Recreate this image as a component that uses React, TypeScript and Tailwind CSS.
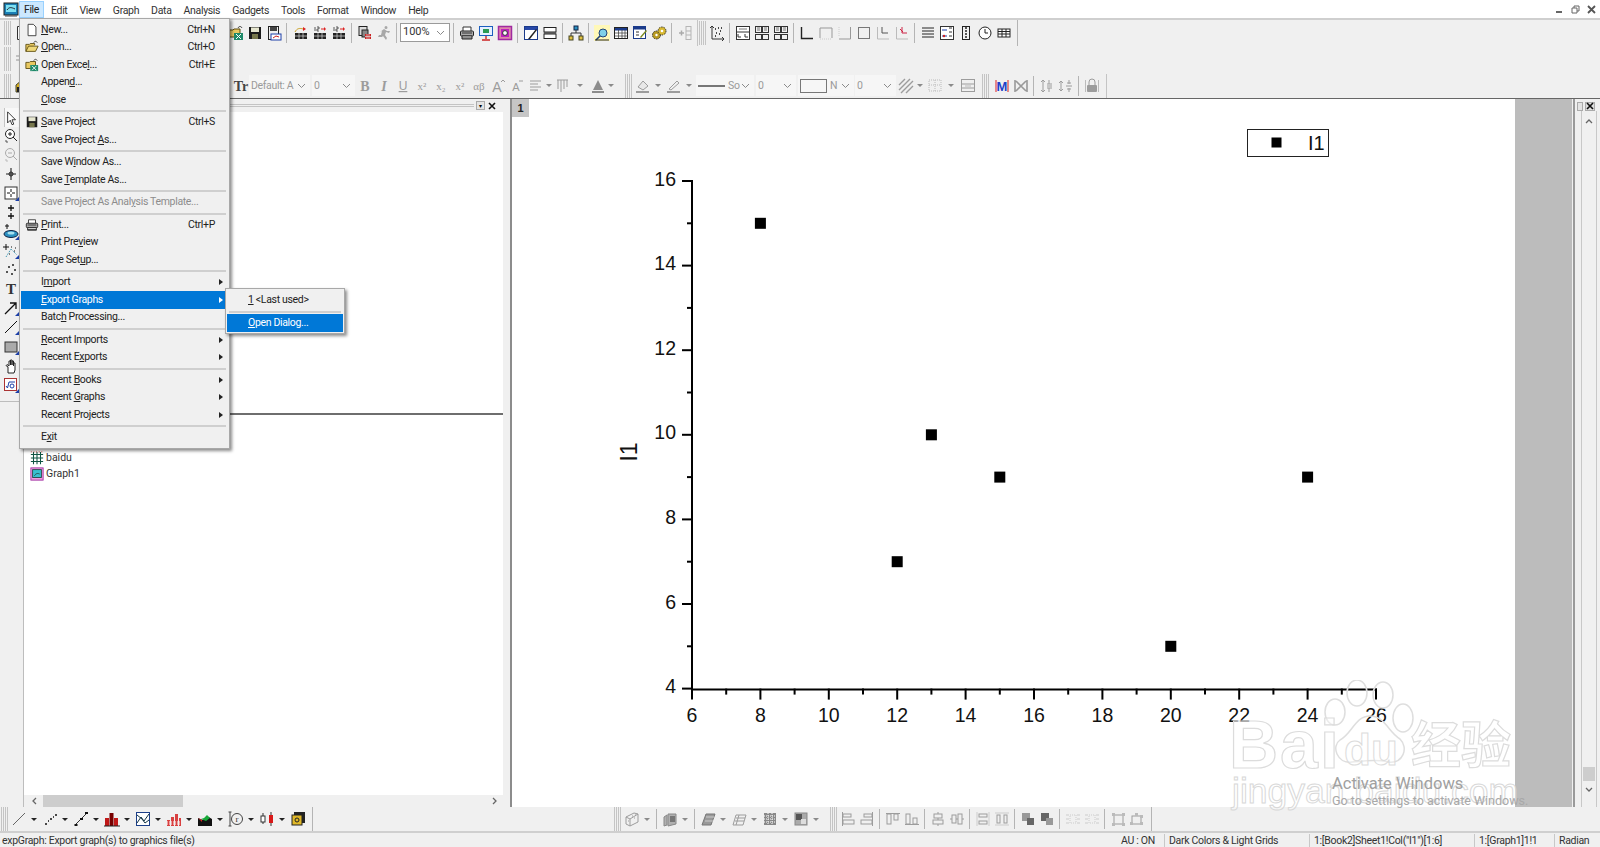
import React, { ReactNode } from "react";

const G = "#9c9c9c";
const Svg = ({ children, s = 16 }: { children: ReactNode; s?: number }) => (
  <svg width={s} height={s} viewBox="0 0 16 16" fill="none" className="block shrink-0">{children}</svg>
);

const grid = (a: string, x = 2, y = 8, w = 12, h = 6) => (
  <g>
    <rect x={x} y={y} width={w} height={h} fill={a} />
    <path d={`M${x} ${y + h / 2}h${w}M${x + w / 3} ${y}v${h}M${x + (2 * w) / 3} ${y}v${h}`} stroke="#ddd" strokeWidth="0.7" />
  </g>
);
const corner = <path d="M16 16v-4l-4 4z" fill="#1c3fa8" />;

const icons: Record<string, ReactNode> = {
  logo: <g><rect x="1" y="2" width="14" height="12" fill="#1a7fb5" stroke="#222" /><rect x="3" y="4" width="10" height="7" fill="#7fe0f0" /><path d="M4 9c2-3 4-3 8-1" stroke="#223" /><path d="M2 15h12" stroke="#444" /></g>,
  newdoc: <path d="M3.5 1.5h6l3 3v10h-9z" stroke="#333" fill="#fff" />,
  open: <g><path d="M1 13V5h4l1-1h5v2" stroke="#5a4a10" fill="#e8c860" /><path d="M1 13l3-6h11l-3 6z" fill="#f0d878" stroke="#5a4a10" /><path d="M10 3c1-2 3-2 4 0" stroke="#333" /></g>,
  excel: <g><path d="M1 12V5h4l1-1h6v8z" fill="#e8c860" stroke="#5a4a10" /><rect x="6" y="8" width="9" height="7" fill="#1f8a6a" /><path d="M8 9l5 5M13 9l-5 5" stroke="#fff" /><path d="M10 3c1-2 3-2 4 0" stroke="#333" /></g>,
  save: <g><rect x="2" y="2" width="12" height="12" fill="#1c1c1c" /><rect x="4" y="2.5" width="8" height="4.5" fill="#e6e6cf" /><rect x="5" y="9" width="6" height="5" fill="#77774c" /></g>,
  saveas: <g><rect x="2.5" y="1.5" width="10" height="13" stroke="#222" /><rect x="4" y="2" width="7" height="4" fill="#444" /><rect x="5" y="9" width="10" height="6" fill="#fff" stroke="#1c3fa8" /><path d="M7 13l3-2 3 1" stroke="#c22" /></g>,
  gridA: <g>{grid("#222")}<path d="M2 7c2-4 5-4 8-3" stroke="#c9a020" /><path d="M10 2l3 2-3 2z" fill="#d22" /></g>,
  grid12: <g>{grid("#222")}<path d="M3 2v4M5 2h2v2H5v2h2" stroke="#333" strokeWidth="0.8" /><path d="M9 4h3" stroke="#d22" /><path d="M12 2l2 2-2 2z" fill="#d22" /></g>,
  copyRed: <g><rect x="2" y="1.5" width="8" height="9" fill="#ddd" stroke="#222" /><rect x="5" y="5" width="6" height="7" fill="#888" stroke="#222" />{grid("#c22", 8, 9, 6, 5)}</g>,
  runner: <path d="M10 1a1.5 1.5 0 110 3 1.5 1.5 0 010-3zM4 7l4-3 3 2 3 0-1 2-3-1-1 3 2 3-1 2-3-4-1 1-4 0 1-2 2 0 1-4-2 1z" fill="#a8a8a8" />,
  printer: <g><path d="M4 6V2h8v4" stroke="#333" fill="#fff" /><rect x="1.5" y="6" width="13" height="5" rx="1" fill="#aaa" stroke="#222" /><path d="M3 13h10M3 11h10v3H3z" stroke="#222" fill="#fff" /><path d="M3 8h10" stroke="#333" /></g>,
  projector: <g><rect x="1.5" y="1.5" width="13" height="9" fill="#e6f0ff" stroke="#1c5fbf" /><rect x="5" y="4" width="6" height="4" fill="#2c9a55" /><path d="M8 11v3M4 15h8" stroke="#c22" strokeWidth="1.4" /></g>,
  magenta: <g><rect x="1.5" y="1.5" width="13" height="13" fill="#d8a" stroke="#a02aa0" strokeWidth="1.5" /><rect x="4" y="4" width="8" height="8" fill="#c020c0" /><circle cx="8" cy="8" r="2.4" fill="#fff" stroke="#333" /></g>,
  notepen: <g><rect x="1.5" y="1.5" width="13" height="13" fill="#fff" stroke="#1a3a8a" /><rect x="2" y="2" width="12" height="3" fill="#2848a8" /><path d="M5 14L13 4l1 1-7 9z" fill="#222" /></g>,
  twolines: <g><rect x="2" y="2.5" width="12" height="4.5" fill="#fff" stroke="#222" /><rect x="2" y="9" width="12" height="4.5" fill="#fff" stroke="#222" /><path d="M2 8h12" stroke="#222" /></g>,
  tree: <g><rect x="6" y="1" width="4" height="4" fill="#2a8fc0" stroke="#124" /><rect x="1" y="11" width="4" height="4" fill="#e0c040" stroke="#442" /><rect x="11" y="11" width="4" height="4" fill="#e0c040" stroke="#442" /><path d="M8 5v3M3 11V8h10v3" stroke="#333" /></g>,
  magnify: <g><rect x="0" y="0" width="16" height="16" fill="#fff8b8" /><circle cx="9" cy="8" r="4" fill="#7fd0e8" stroke="#247" /><path d="M6 11l-4 4" stroke="#247" strokeWidth="1.6" /><path d="M1 15h14" stroke="#222" /></g>,
  table: <g><rect x="1.5" y="2.5" width="13" height="11" fill="#fff" stroke="#222" /><rect x="2" y="3" width="12" height="2.5" fill="#1a3a8a" /><path d="M2 8h12M2 11h12M5.5 5v8M9 5v8M12 5v8" stroke="#333" strokeWidth="0.7" /></g>,
  tablepen: <g><rect x="1.5" y="1.5" width="12" height="12" fill="#fff" stroke="#1a3a8a" /><rect x="2" y="2" width="11" height="2.5" fill="#1a3a8a" /><path d="M4 7h3M4 10h3" stroke="#333" /><path d="M8 12l6-7 1 1-6 7z" fill="#7a8a20" /></g>,
  gears: <g><circle cx="5.5" cy="10" r="4" fill="#b89a20" stroke="#333" strokeDasharray="1.5 1" /><circle cx="11" cy="6" r="4" fill="#d8b830" stroke="#333" strokeDasharray="1.5 1" /><circle cx="11" cy="6" r="1.3" fill="#fff" /><circle cx="5.5" cy="10" r="1.2" fill="#fff" /></g>,
  plusbars: <g><path d="M2 8h5M4.5 5.5v5" stroke="#aaa" strokeWidth="1.5" /><rect x="9" y="1.5" width="5" height="13" stroke="#b5b5b5" /><path d="M9 6h5M9 10h5" stroke="#b5b5b5" /></g>,
  scatterAxes: <g><path d="M3 1v13h12" stroke="#333" /><path d="M1 3l2-2 2 2M13 12l2 2-2 2" stroke="#333" /><path d="M6 4h1M9 3h1M11 6h1M7 8h1M10 9h1M6 11h1M12 3h1" stroke="#111" strokeWidth="1.3" /></g>,
  layout1: <g><rect x="1.5" y="1.5" width="13" height="13" stroke="#333" fill="#fff" /><path d="M2 7h12" stroke="#333" /><path d="M4 4h8" stroke="#777" /><path d="M3 12V9M3 12h3M10 12V9M10 12h3" stroke="#333" /></g>,
  layout2: <g><rect x="1.5" y="1.5" width="6" height="6" stroke="#333" /><rect x="8.5" y="1.5" width="6" height="6" stroke="#333" /><rect x="1.5" y="9.5" width="6" height="5" stroke="#333" /><rect x="8.5" y="9.5" width="6" height="5" stroke="#333" /><path d="M3 3h3M10 3h3M3 5h3M10 5h3" stroke="#777" /></g>,
  axisL: <path d="M2.5 2v11.5H14" stroke="#222" strokeWidth="1.4" />,
  axisT: <g><path d="M2 3h12M2 3v10M14 3v10" stroke="#999" /><path d="M2 14h12" stroke="#ccc" strokeDasharray="1 1" /></g>,
  axisR: <g><path d="M13.5 2v12H2" stroke="#999" /><path d="M2 2v10" stroke="#ccc" strokeDasharray="1 1" /></g>,
  axisBox: <g><rect x="2.5" y="2.5" width="11" height="11" stroke="#777" /></g>,
  axisLL: <g><path d="M2.5 2v12H14" stroke="#bbb" /><path d="M7 2v6h6" stroke="#555" /></g>,
  axisLR: <g><path d="M2.5 2v12H14" stroke="#bbb" /><path d="M8 2v6h5M6 4l3 3" stroke="#c24" /></g>,
  hstack: <g><path d="M2 3h12M2 6h12M2 9h12M2 12h12" stroke="#8a8a8a" strokeWidth="2" /></g>,
  legend: <g><rect x="1.5" y="1.5" width="13" height="13" stroke="#333" fill="#fff" /><path d="M3 5h5M3 11h5" stroke="#1c3fa8" /><circle cx="5" cy="11" r="1.2" fill="#c22" /><path d="M10 3h3M10 7h3M10 11h3" stroke="#333" /></g>,
  vlegend: <g><rect x="4.5" y="1.5" width="7" height="13" stroke="#222" /><path d="M7 3h2M7 6h2M7 9h2M7 12h2" stroke="#222" strokeWidth="1.4" /></g>,
  clock: <g><circle cx="8" cy="8" r="6" stroke="#222" fill="#fff" /><path d="M8 4v4h3" stroke="#222" /></g>,
  smalltable: <g><rect x="2" y="4" width="12" height="8" stroke="#222" fill="#fff" /><path d="M2 6.5h12M2 9h12M6 4v8M10 4v8" stroke="#222" /></g>,
  house: <g><path d="M2 14V7l6-5 6 5v7z" fill="#d8b020" stroke="#443" /><rect x="3" y="9" width="4" height="5" fill="#222" /></g>,
  T: <text x="8" y="13" textAnchor="middle" fontFamily="Liberation Serif, serif" fontWeight="700" fontSize="15" fill="#333">T</text>,
  Tt: <text x="8" y="13" textAnchor="middle" fontFamily="Liberation Serif, serif" fontWeight="700" fontSize="14" fill="#444">Tr</text>,
  B: <text x="8" y="13" textAnchor="middle" fontFamily="Liberation Serif, serif" fontWeight="700" fontSize="14" fill={G}>B</text>,
  Ii: <text x="8" y="13" textAnchor="middle" fontFamily="Liberation Serif, serif" fontStyle="italic" fontWeight="700" fontSize="14" fill={G}>I</text>,
  U: <text x="8" y="12" textAnchor="middle" fontFamily="Liberation Sans, sans-serif" fontSize="12" fill={G} textDecoration="underline">U</text>,
  xsup: <text x="8" y="12" textAnchor="middle" fontFamily="Liberation Serif, serif" fontSize="11" fill={G}>x²</text>,
  xsub: <text x="8" y="12" textAnchor="middle" fontFamily="Liberation Serif, serif" fontSize="11" fill={G}>x₂</text>,
  xsupsub: <text x="8" y="12" textAnchor="middle" fontFamily="Liberation Serif, serif" fontSize="11" fill={G}>x²</text>,
  ab: <text x="8" y="12" textAnchor="middle" fontFamily="Liberation Serif, serif" fontSize="11" fill={G}>αβ</text>,
  Aup: <g><text x="7" y="14" textAnchor="middle" fontFamily="Liberation Sans, sans-serif" fontSize="14" fill={G}>A</text><path d="M11 4l2-2 2 2" stroke={G} /></g>,
  Adown: <g><text x="7" y="13" textAnchor="middle" fontFamily="Liberation Sans, sans-serif" fontSize="11" fill={G}>A</text><path d="M10 3h4" stroke={G} /></g>,
  align: <path d="M2 3h11M2 6h8M2 9h11M2 12h8" stroke={G} />,
  columns: <path d="M3 2v9M6 2v12M9 2v9M12 2v7M2 2h11" stroke={G} />,
  Acolor: <g><path d="M8 2l5 10H3z" fill="#8c8c8c" /><rect x="2" y="13" width="12" height="2" fill="#8c8c8c" /></g>,
  fill: <g><path d="M3 9l5-6 5 5-5 4z" stroke={G} fill="#e8e8e8" /><rect x="1" y="13" width="13" height="2" fill={G} /></g>,
  pen: <g><path d="M3 11l8-8 2 2-8 7z" stroke={G} /><rect x="1" y="13" width="13" height="2" fill={G} /></g>,
  hatch: <g><path d="M1 7l6-6M1 12L12 1M3 15L15 3M8 15l7-7" stroke={G} strokeWidth="1.4" /></g>,
  gridDots: <g><rect x="2" y="2" width="12" height="11" stroke="#bbb" strokeDasharray="1 1" /><path d="M2 7h12M8 2v11" stroke="#bbb" strokeDasharray="1 1" /></g>,
  tableGray: <g><rect x="1.5" y="1.5" width="13" height="12" stroke={G} /><path d="M2 6h12M2 10h12" stroke={G} /><path d="M5 8h6" stroke="#bbb" /></g>,
  M: <g><path d="M2 2v12M14 2v12" stroke="#d22" /><text x="8" y="13" textAnchor="middle" fontFamily="Liberation Sans, sans-serif" fontWeight="700" fontSize="13" fill="#1c3fc8">M</text></g>,
  X: <path d="M3 3l10 10M13 3L3 13M2 2v12M14 2v12" stroke="#999" strokeWidth="1.6" />,
  arrowsV: <path d="M4 2v12M2 4l2-2 2 2M2 12l2 2 2-2M10 2v4M10 10v4M8 8h5M8 6h5M8 10h5" stroke={G} />,
  arrowsH: <path d="M3 3v10M1 5l2-2 2 2M1 11l2 2 2-2M8 8h6M11 2v4M11 10v4M9 5h4M9 11h4" stroke={G} />,
  lock: <g><path d="M5 7V4a3 3 0 016 0v3" stroke={G} /><rect x="3" y="7" width="10" height="7" rx="1" fill={G} /><path d="M1.5 2v12M14.5 2v12" stroke="#bbb" /></g>,

  pointer: <g><path d="M3 1l9 9H8l2 5-2 .6-2-5-3 3z" fill="#fff" stroke="#222" /></g>,
  zoomIn: <g><circle cx="7" cy="6" r="4.5" stroke="#222" fill="#fff" /><path d="M5 6h4M7 4v4M10 9l4 4" stroke="#222" /><path d="M2 13h2v2" stroke="#555" /></g>,
  zoomOut: <g><circle cx="7" cy="6" r="4.5" stroke="#aaa" /><path d="M5 6h4M10 9l4 4" stroke="#aaa" /><path d="M2 13h2v2" stroke="#bbb" /></g>,
  cross: <g><circle cx="8" cy="8" r="2" stroke="#222" /><path d="M8 2v12M3 8h10" stroke="#222" strokeWidth="1.1" /></g>,
  dashBox: <g><rect x="2" y="2" width="12" height="12" fill="#fff" stroke="#333" /><path d="M8 4v3M8 9v3M4 8h3M9 8h3" stroke="#111" />{corner}</g>,
  plus2: <path d="M8 1v6M5 4h6M8 9v6M5 12h6" stroke="#111" strokeWidth="1.3" />,
  ellipse: <g><path d="M4 0v5M2 2h4" stroke="#111" /><ellipse cx="8" cy="10" rx="7" ry="3.5" fill="#2a8fc0" stroke="#124" /><ellipse cx="8" cy="9" rx="3.5" ry="1.5" fill="#a8e0f0" />{corner}</g>,
  plusDots: <g><path d="M3 1v6M0 4h6" stroke="#111" /><path d="M3 14l5-8 6 6" stroke="#28a" strokeDasharray="1 1" /><path d="M8 4h1M12 5h1M6 11h1M11 8h1" stroke="#111" />{corner}</g>,
  dots: <path d="M5 5h2M9 3h2M3 10h2M11 8h2M8 12h2" stroke="#222" strokeWidth="1.3" />,
  arrow: <g><path d="M2 14L13 3M7 3h6v6" stroke="#111" strokeWidth="1.3" />{corner}</g>,
  line: <g><path d="M2 14L14 2" stroke="#111" />{corner}</g>,
  rectT: <g><rect x="2" y="3" width="12" height="10" fill="#aaa" stroke="#333" />{corner}</g>,
  hand: <path d="M5 15V9L3 7.5 4 6.5l2 1.500V3h1.500v4-5H9v5-4h1.500v5-3H12v7l-1 3z" stroke="#222" fill="#fff" />,
  sqrt: <g><rect x="1.5" y="1.5" width="12" height="12" fill="#fff" stroke="#a33" /><path d="M3 9l1.500 2L6 5h6" stroke="#1c3fa8" /><circle cx="9" cy="9" r="2" stroke="#1c3fa8" />{corner}</g>,
  gridGreen: <g><path d="M1 4h14M1 8h14M1 12h14M4 1v14M8 1v14M12 1v14" stroke="#154" strokeWidth="1.2" /><path d="M1 1h14" stroke="#c22" strokeDasharray="1 2" /></g>,
  graphIcon: <g><rect x="1" y="1" width="14" height="14" fill="#f0a0e0" stroke="#a02aa0" /><rect x="3" y="3" width="10" height="9" fill="#38c0d0" stroke="#244" /><path d="M5 10c2-3 4-3 6-2" stroke="#244" /></g>,

  plotLine: <path d="M2 14L14 2" stroke="#666" />,
  plotDots: <path d="M3 13h2M8 8h2M13 4h2M6 10h1M11 6h1" stroke="#111" strokeWidth="1.6" />,
  plotLS: <g><path d="M2 14L14 2" stroke="#333" /><path d="M1.500 13h3v2h-3zM7 7h3v2H7zM12 1h3v2h-3z" fill="#111" /></g>,
  plotBar: <g><path d="M1 7h4v8H1zM10 7h4v8h-4z" fill="#c01818" /><path d="M5.500 2h4v13h-4z" fill="#700" /><path d="M0 15h16" stroke="#222" /></g>,
  plotBox: <g><rect x="1.500" y="1.500" width="13" height="13" fill="#fff" stroke="#1c3f88" /><path d="M2 12l4-6 3 4 5-7M2 4l5 4 3 4 4-3" stroke="#134" /></g>,
  plot3d: <g><path d="M1 9h3v6H1zM5 6h3v9H5zM9 3h3v12H9zM13 7h2v8h-2z" fill="#d84040" /><path d="M1 11h14M1 13h14" stroke="#fff" strokeDasharray="1 1" /></g>,
  plotArea: <g><path d="M1 7l5 2 4-4 5 3v7H1z" fill="#111" /><path d="M4 8l3-1 3-3 3 3-4 3z" fill="#18a838" /><path d="M1 7l4 2v2z" fill="#d22" /></g>,
  plotPolar: <g><path d="M2 1v14M0.500 1h3M0.500 15h3" stroke="#444" /><circle cx="9" cy="8" r="5.500" stroke="#444" /><text x="9" y="11" textAnchor="middle" fontFamily="Liberation Serif, serif" fontSize="9" fill="#333">r</text></g>,
  plotStock: <g><path d="M4 2v11M12 1v14" stroke="#333" /><rect x="2" y="5" width="4" height="6" fill="#fff" stroke="#333" /><rect x="10" y="4" width="4" height="8" fill="#d81818" /></g>,
  plotTpl: <g><rect x="4" y="1" width="11" height="11" fill="#222" /><rect x="2" y="4" width="10" height="10" fill="#e0b828" stroke="#222" /><circle cx="7" cy="9" r="2" stroke="#222" /></g>,

  g3d1: <g><path d="M2 6l8-4 4 1v8l-8 4-4-2z" stroke={G} /><path d="M2 6l4 2v7M6 8l8-5" stroke={G} /><path d="M8 5h1M11 4h1M10 7h1M4 10h1" stroke={G} /></g>,
  g3d2: <g><path d="M2 6l3-2v10l-3 1zM6 3h8v10l-8 2z" fill="#b0b0b0" stroke="#888" /><path d="M8 5h5v6H8z" fill="#777" /></g>,
  g3d3: <g><path d="M2 14l4-11h9l-4 11z" fill="#999" stroke="#777" /><path d="M5 10h8M6 6h8" stroke="#ccc" /></g>,
  g3d4: <g><path d="M2 14l3-10h10l-3 10z" stroke={G} /><path d="M4 10h9M5 7h9M8 4l-3 10" stroke={G} /></g>,
  g3d5: <g><rect x="2" y="2" width="12" height="12" fill="#888" /><path d="M2 5h12M2 8h12M2 11h12M6 2v12M10 2v12" stroke="#fff" strokeDasharray="1 1" /></g>,
  g3d6: <g><rect x="2" y="2" width="12" height="12" fill="#aaa" stroke="#888" /><rect x="3" y="3" width="6" height="6" fill="#555" /><rect x="8" y="8" width="5" height="5" fill="#ddd" /></g>,
  a1: <g><path d="M2.500 1v14" stroke={G} /><rect x="3" y="3" width="8" height="3" stroke={G} /><rect x="3" y="9" width="11" height="4" stroke={G} /></g>,
  a2: <g><path d="M13.500 1v14" stroke={G} /><rect x="5" y="3" width="8" height="3" stroke={G} /><rect x="2" y="9" width="11" height="4" stroke={G} /></g>,
  a3: <g><path d="M1 2.500h14" stroke={G} /><rect x="2" y="3" width="4" height="10" stroke={G} /><rect x="9" y="3" width="4" height="6" stroke={G} /></g>,
  a4: <g><path d="M1 13.500h14" stroke={G} /><rect x="2" y="3" width="4" height="10" stroke={G} /><rect x="9" y="7" width="4" height="6" stroke={G} /></g>,
  a5: <g><path d="M8 1v14" stroke={G} /><rect x="4" y="3" width="8" height="4" fill="#f0f0f0" stroke={G} /><rect x="3" y="9" width="10" height="4" fill="#f0f0f0" stroke={G} /></g>,
  a6: <g><path d="M1 8h14" stroke={G} /><rect x="3" y="4" width="4" height="8" fill="#f0f0f0" stroke={G} /><rect x="9" y="3" width="4" height="10" fill="#f0f0f0" stroke={G} /></g>,
  a7: <g><path d="M2 1v14M14 1v14" stroke="#ccc" /><rect x="4" y="3" width="8" height="3" stroke={G} /><rect x="4" y="10" width="8" height="3" stroke={G} /></g>,
  a8: <g><path d="M1 2h14M1 14h14" stroke="#ccc" /><rect x="3" y="4" width="3" height="8" stroke={G} /><rect x="10" y="4" width="3" height="8" stroke={G} /></g>,
  o1: <g><rect x="2" y="2" width="8" height="8" fill="#999" /><rect x="7" y="7" width="7" height="7" fill="#666" /></g>,
  o2: <g><rect x="2" y="2" width="8" height="8" fill="#666" /><rect x="7" y="7" width="7" height="7" fill="#999" /></g>,
  d1: <g><rect x="5" y="4" width="6" height="8" stroke="#ccc" strokeDasharray="1 1" /><path d="M1 4h3M1 8h3M1 12h3M12 4h3M12 8h3M12 12h3" stroke="#ccc" /></g>,
  r1: <g><rect x="4" y="4" width="9" height="9" stroke={G} /><path d="M2 2h3v3H2zM12 2h3v3h-3zM2 12h3v3H2zM12 12h3v3h-3z" fill="#bbb" /></g>,
  r2: <g><rect x="3" y="5" width="9" height="8" stroke={G} /><path d="M6 2h3v3H6zM11 4h3v3h-3zM1 11h3v3H1zM11 11h3v3h-3z" fill="#bbb" /></g>,
  eqlines: <path d="M2 5h12M2 9h12" stroke="#b4b4b4" strokeWidth="1.300" />,
};

const Ic = ({ n, s }: { n: string; s?: number }) => <Svg s={s}>{icons[n]}</Svg>;
const Cell = ({ n }: { n: string }) => (
  <span className="flex h-[20px] w-[19px] shrink-0 items-center justify-center"><Ic n={n} /></span>
);
const Sep = () => <span className="mx-[3px] h-[20px] w-px shrink-0 bg-[#b4b4b4]" />;
const Drop = ({ className = "w-[12px]" }: { className?: string }) => (
  <span className={`flex h-[20px] shrink-0 items-center justify-center ${className}`}>
    <span className="h-0 w-0 border-x-[3px] border-t-[3px] border-x-transparent border-t-[#8a8a8a]" />
  </span>
);
const DropDark = () => (
  <span className="flex h-[20px] w-[12px] shrink-0 items-center justify-center">
    <span className="h-0 w-0 border-x-[3px] border-t-[3px] border-x-transparent border-t-[#222]" />
  </span>
);
const Grip = () => (
  <span className="mx-[1px] flex h-[24px] w-[7px] shrink-0 justify-between">
    <span className="w-[3px] border-x border-[#c4c4c4]" />
    <span className="w-[3px] border-x border-[#c4c4c4]" />
  </span>
);
const Chev = () => (
  <svg width="9" height="6" viewBox="0 0 9 6" className="block shrink-0" fill="none"><path d="M1 1l3.500 3.500L8 1" stroke="#8a8a8a" /></svg>
);
const Combo = ({ children, className }: { children: ReactNode; className: string }) => (
  <span className={`flex h-[21px] shrink-0 items-center justify-between bg-[#f6f6f6] pr-[4px] pl-[2px] text-[10.5px] tracking-[-0.33px] text-[#9a9a9a] ${className}`}>
    {children}
    <Chev />
  </span>
);

const Cells = ({ ns }: { ns: string[] }) => <>{ns.map((n, i) => <Cell key={i} n={n} />)}</>;

type Row = { l?: ReactNode; k?: string; i?: string; sub?: boolean; off?: boolean; on?: boolean; sep?: boolean };
const menu: Row[] = [
  { l: <><u>N</u>ew...</>, k: "Ctrl+N", i: "newdoc" },
  { l: <><u>O</u>pen...</>, k: "Ctrl+O", i: "open" },
  { l: <>Open Exce<u>l</u>...</>, k: "Ctrl+E", i: "excel" },
  { l: <>Appen<u>d</u>...</> },
  { l: <><u>C</u>lose</> },
  { sep: true },
  { l: <><u>S</u>ave Project</>, k: "Ctrl+S", i: "save" },
  { l: <>Save Project <u>A</u>s...</> },
  { sep: true },
  { l: <>Save W<u>i</u>ndow As...</> },
  { l: <>Save <u>T</u>emplate As...</> },
  { sep: true },
  { l: <>Save Project As Anal<u>y</u>sis Template...</>, off: true },
  { sep: true },
  { l: <><u>P</u>rint...</>, k: "Ctrl+P", i: "printer" },
  { l: <>Print Pre<u>v</u>iew</> },
  { l: <>Page Set<u>u</u>p...</> },
  { sep: true },
  { l: <>I<u>m</u>port</>, sub: true },
  { l: <><u>E</u>xport Graphs</>, sub: true, on: true },
  { l: <>Batc<u>h</u> Processing...</> },
  { sep: true },
  { l: <><u>R</u>ecent Imports</>, sub: true },
  { l: <>Recent E<u>x</u>ports</>, sub: true },
  { sep: true },
  { l: <>Recent <u>B</u>ooks</>, sub: true },
  { l: <>Recent <u>G</u>raphs</>, sub: true },
  { l: <>Recent Pro<u>j</u>ects</>, sub: true },
  { sep: true },
  { l: <>E<u>x</u>it</> },
];

const FileMenu = () => (
  <div className="absolute top-[18px] left-[19px] z-20 w-[211px] border border-[#a8a8a8] bg-[#f0f0f0] pt-[2px] pb-[2px] pl-[1px] text-[10.5px] leading-none tracking-[-0.33px] text-[#222] shadow-[2px_2px_3px_rgba(0,0,0,0.45)]">
    {menu.map((r, i) =>
      r.sep ? (
        <div key={i} className="flex h-[5px] items-center pr-[3px] pl-[2px]"><div className="h-[2px] w-full bg-[#cfcfcf]" /></div>
      ) : (
        <div key={i} className={`flex h-[17.5px] w-[205px] items-center ${r.on ? "bg-[#0078d7] text-white" : ""} ${r.off ? "text-[#8c8c8c]" : ""}`}>
          <span className="flex w-[20px] shrink-0 items-center justify-center pl-[1px]">{r.i ? <Ic n={r.i} s={14} /> : null}</span>
          <span className="flex-1 whitespace-nowrap">{r.l}</span>
          {r.k ? <span className="mr-[11px]">{r.k}</span> : null}
          {r.sub ? <span className={`mr-[3px] h-0 w-0 border-y-[3.5px] border-l-[4px] border-y-transparent ${r.on ? "border-l-white" : "border-l-[#222]"}`} /> : null}
        </div>
      )
    )}
  </div>
);

const SubMenu = () => (
  <div className="absolute top-[288px] left-[225px] z-30 w-[120px] border border-[#a8a8a8] bg-[#f0f0f0] p-[1px] text-[10.5px] leading-none tracking-[-0.33px] text-[#222] shadow-[2px_2px_3px_rgba(0,0,0,0.45)]">
    <div className="flex h-[20px] items-center pl-[21px]"><span><u>1</u> &lt;Last used&gt;</span></div>
    <div className="flex h-[4px] items-center px-[2px]"><div className="h-[2px] w-full bg-[#cfcfcf]" /></div>
    <div className="flex h-[18px] items-center bg-[#0078d7] pl-[21px] text-white"><span><u>O</u>pen Dialog...</span></div>
  </div>
);

const MenuBar = () => (
  <div className="flex h-[18px] items-center bg-white pl-[3px] text-[10.5px] tracking-[-0.33px] text-[#333]">
    <span className="w-[16px]"><Ic n="logo" /></span>
    <span className="flex h-[17px] w-[25px] items-center justify-center border border-[#99d1ff] bg-[#cce8ff] pt-[2px] text-[#222]">File</span>
    <div className="ml-[7px] flex gap-[12px] pt-[3px]">
      {["Edit", "View", "Graph", "Data", "Analysis", "Gadgets", "Tools", "Format", "Window", "Help"].map((m) => <span key={m}>{m}</span>)}
    </div>
    <div className="ml-auto flex items-center pr-[1px] text-[#666]">
      <span className="flex h-[15px] w-[16px] items-center justify-center"><span className="mt-[5px] h-[2px] w-[6px] bg-[#666]" /></span>
      <span className="flex h-[15px] w-[16px] items-center justify-center"><svg width="9" height="9" viewBox="0 0 9 9" fill="none"><path d="M3 3V1h5v5H6M1 3h5v5H1z" stroke="#666" /></svg></span>
      <span className="flex h-[15px] w-[16px] items-center justify-center"><svg width="9" height="9" viewBox="0 0 9 9" fill="none"><path d="M1 1l7 7M8 1L1 8" stroke="#555" strokeWidth="1.800" /></svg></span>
    </div>
  </div>
);

const Row1 = () => (
  <div className="flex h-[27px] items-center border-t-2 border-[#cfcfcf] bg-[#f0f0f0]">
    <span className="ml-[3px] flex"><Grip /></span>
    <Cell n="newdoc" />
    <span className="w-[195px] shrink-0" />
    <Cells ns={["excel", "save", "saveas"]} />
    <Sep />
    <span className="w-px" />
    <Cells ns={["gridA", "grid12", "grid12"]} />
    <Sep />
    <Cells ns={["copyRed", "runner"]} />
    <Sep />
    <span className="flex h-[19px] w-[50px] shrink-0 items-center justify-between border border-[#9a9a9a] bg-white pr-[4px] pl-[2px] text-[11px] text-[#333]">100%<Chev /></span>
    <Sep />
    <Cells ns={["printer", "projector", "magenta"]} />
    <Sep />
    <Cells ns={["notepen", "twolines"]} />
    <Sep />
    <Cell n="tree" />
    <Sep />
    <Cells ns={["magnify", "table", "tablepen", "gears"]} />
    <Sep />
    <Cell n="plusbars" />
    <span className="ml-[3px] h-[26px] w-px bg-[#c4c4c4]" />
    <Grip />
    <Cell n="scatterAxes" />
    <Sep />
    <Cells ns={["layout1", "layout2", "layout2"]} />
    <Sep />
    <Cells ns={["axisL", "axisT", "axisR", "axisBox", "axisLL", "axisLR"]} />
    <Sep />
    <Cells ns={["hstack", "legend", "vlegend", "clock", "smalltable"]} />
    <span className="ml-[4px] h-[26px] w-px bg-[#b4b4b4]" />
  </div>
);

const Row2 = () => (
  <div className="flex h-[28px] items-center bg-[#f0f0f0] pl-[3px]">
    <Grip />
    <Cell n="eqlines" />
  </div>
);

const Row3 = () => (
  <div className="flex h-[25px] items-center bg-[#f0f0f0] pl-[3px]">
    <Grip />
    <Cell n="house" />
    <span className="w-[200px] shrink-0" />
    <Cell n="Tt" />
    <Combo className="ml-[-1px] w-[61px] text-[#9a9a9a]"><span className="whitespace-nowrap">Default: A</span></Combo>
    <Combo className="ml-[2px] w-[43px]">0</Combo>
    <Cells ns={["B", "Ii", "U", "xsup", "xsub", "xsupsub", "ab", "Aup", "Adown", "align"]} />
    <Drop className="w-[8px]" />
    <Cell n="columns" />
    <Drop className="w-[16px]" />
    <Cell n="Acolor" />
    <Drop className="w-[8px]" />
    <span className="w-[9px] shrink-0" />
    <Grip />
    <Cell n="fill" />
    <Drop />
    <Cell n="pen" />
    <Drop />
    <Combo className="ml-[1px] w-[58px]"><span className="flex items-center gap-[3px]"><span className="h-[2px] w-[27px] bg-[#777]" />So</span></Combo>
    <Combo className="ml-[2px] w-[40px]">0</Combo>
    <Combo className="ml-[2px] w-[56px]"><span className="flex items-center gap-[3px]"><span className="h-[14px] w-[27px] border border-[#777]" />N</span></Combo>
    <Combo className="ml-[1px] w-[41px]">0</Combo>
    <Cell n="hatch" />
    <Drop className="w-[10px]" />
    <Cell n="gridDots" />
    <Drop className="w-[14px]" />
    <Cell n="tableGray" />
    <span className="w-[4px] shrink-0" />
    <Grip />
    <span className="w-[2px] shrink-0" />
    <Cells ns={["M", "X"]} />
    <Sep />
    <Cells ns={["arrowsV", "arrowsH"]} />
    <Sep />
    <Cell n="lock" />
    <span className="ml-[5px] h-[24px] w-px bg-[#c4c4c4]" />
  </div>
);

const leftTools = ["zoomIn", "zoomOut", "cross", "dashBox", "plus2", "ellipse", "plusDots", "dots", "T", "arrow", "line", "rectT", "hand", "sqrt"];

const LeftBar = () => (
  <div className="flex w-[24px] shrink-0 flex-col border-r border-[#bdbdbd] bg-[#f0f0f0]">
    <div className="flex flex-col items-center border-b border-[#bdbdbd] pt-[9px] pb-[6px]">
      <span className="mb-[-1px] flex h-[19px] w-[15px] items-center justify-center border-l border-[#c4c4c4] bg-[#f8f8f8]"><Ic n="pointer" s={14} /></span>
      {leftTools.map((n) => (
        <span key={n} className="flex h-[19.2px] items-center justify-center pr-[2px]"><Ic n={n} /></span>
      ))}
    </div>
  </div>
);

const Panel = () => (
  <div className="flex w-[479px] shrink-0 flex-col bg-white">
    <div className="flex h-[13px] items-center justify-end gap-[2px] bg-[#f0f0f0] pr-[7px]">
      <span className="h-[3px] flex-1 border-y border-[#c4c4c4]" />
      <span className="flex h-[9px] w-[9px] items-center justify-center border border-[#aaa] bg-[#e4e4e4] text-[6px] leading-none">▾</span>
      <span className="flex h-[9px] w-[9px] items-center justify-center"><svg width="8" height="8" viewBox="0 0 8 8" fill="none"><path d="M1 1l6 6M7 1L1 7" stroke="#111" strokeWidth="1.600" /></svg></span>
    </div>
    <div className="h-[303px] border-b-2 border-[#6e6e6e]" />
    <div className="flex flex-1 flex-col pt-[35px] pl-[6px] text-[10.5px] leading-none text-[#333]">
      <div className="flex h-[16px] items-center gap-[2px]"><Ic n="gridGreen" s={14} /><span>baidu</span></div>
      <div className="flex h-[16px] items-center gap-[2px]"><Ic n="graphIcon" s={14} /><span>Graph1</span></div>
    </div>
    <div className="flex h-[12px] items-center bg-[#f0f0f0]">
      <span className="flex w-[19px] justify-center"><svg width="6" height="8" viewBox="0 0 6 8" fill="none"><path d="M5 1L2 4l3 3" stroke="#666" strokeWidth="1.300" /></svg></span>
      <span className="h-full w-[140px] bg-[#cdcdcd]" />
      <span className="flex-1" />
      <span className="flex w-[17px] justify-center"><svg width="6" height="8" viewBox="0 0 6 8" fill="none"><path d="M1 1l3 3-3 3" stroke="#666" strokeWidth="1.300" /></svg></span>
    </div>
  </div>
);

const X0 = 692, XS = 34.2, Y16 = 180, YS = 42.3;
const px = (v: number) => X0 + (v - 6) * XS;
const py = (v: number) => Y16 + (16 - v) * YS;
const xTicks = Array.from({ length: 21 }, (_, i) => i + 6);
const yTicks = Array.from({ length: 13 }, (_, i) => i + 4);
const pts = [[8, 15], [12, 7], [13, 10], [15, 9], [20, 5], [24, 9]];

const Chart = () => (
  <svg viewBox="512 98 1003 708" className="block h-full w-full" fontFamily="Liberation Sans, sans-serif" fill="#111">
    <path d={`M${X0} ${Y16 - 1}V${py(4) + 1}H${px(26) + 1}`} stroke="#000" strokeWidth="2" fill="none" />
    {xTicks.map((v) => (
      <line key={v} x1={px(v)} x2={px(v)} y1={py(4)} y2={py(4) + (v % 2 ? 6 : 11)} stroke="#000" strokeWidth="2" />
    ))}
    {yTicks.map((v) => (
      <line key={v} x1={X0} x2={X0 - (v % 2 ? 5 : 10)} y1={py(v)} y2={py(v)} stroke="#000" strokeWidth="2" />
    ))}
    {xTicks.filter((v) => v % 2 === 0).map((v) => (
      <text key={v} x={px(v)} y={721} textAnchor="middle" fontSize="19.500">{v}</text>
    ))}
    {yTicks.filter((v) => v % 2 === 0).map((v) => (
      <text key={v} x={676} y={py(v) + 4.5} textAnchor="end" fontSize="19.500">{v}</text>
    ))}
    <text x={637} y={451} textAnchor="middle" fontSize="23" transform="rotate(-90 637 451)">I1</text>
    {pts.map(([a, b]) => (
      <rect key={a} x={px(a) - 5.5} y={py(b) - 5.5} width="11" height="11" fill="#000" />
    ))}
    <rect x="1247.500" y="128.500" width="81" height="27" fill="#fff" stroke="#222" />
    <rect x="1271.500" y="136.500" width="10" height="10" fill="#000" />
    <text x="1308" y="148.500" fontSize="20">I1</text>
  </svg>
);

const Watermark = () => (
  <div className="pointer-events-none absolute top-[680px] left-[1225px] z-10 h-[140px] w-[300px] font-['Liberation_Sans',sans-serif]">
    <svg width="300" height="90" viewBox="0 0 300 90" fill="none" className="absolute top-0 left-0">
      <ellipse cx="132" cy="13" rx="10" ry="13" stroke="#dedede" strokeWidth="1.500" />
      <ellipse cx="158" cy="15" rx="10" ry="13" stroke="#dedede" strokeWidth="1.500" />
      <ellipse cx="110" cy="32" rx="10" ry="13" stroke="#dedede" strokeWidth="1.500" />
      <ellipse cx="178" cy="38" rx="10" ry="14" stroke="#dedede" strokeWidth="1.500" />
      <path d="M145 36c-15 0-18 18-30 24-9 6-3 24 12 22 12-1 24-3 36 0 15 2 21-14 12-23-12-7-15-23-30-23z" stroke="#dedede" strokeWidth="1.500" />
    </svg>
    <span className="absolute top-[30px] left-[4px] text-[68px] leading-none font-bold tracking-[2px] text-white/40 [-webkit-text-stroke:1.2px_#dcdcdc]">Bai</span>
    <span className="absolute top-[48px] left-[119px] text-[44px] leading-none font-bold text-white/40 [-webkit-text-stroke:1px_#dcdcdc]">du</span>
    <span className="absolute top-[36px] left-[186px] font-['Noto_Sans_CJK_SC',sans-serif] text-[50px] leading-none font-bold whitespace-nowrap text-white/40 [-webkit-text-stroke:1.2px_#dcdcdc]">经验</span>
    <span className="absolute top-[94px] left-[7px] text-[35.5px] leading-none whitespace-nowrap text-white/40 [-webkit-text-stroke:1px_#d8d8d8]">jingyan.baidu.com</span>
    <span className="absolute top-[96px] left-[107px] font-['Roboto',sans-serif] text-[16.5px] leading-none whitespace-nowrap text-[#a0a0a0]">Activate Windows</span>
    <span className="absolute top-[115px] left-[107px] font-['Roboto',sans-serif] text-[12.5px] leading-none whitespace-nowrap text-[#a8a8a8]">Go to settings to activate Windows.</span>
  </div>
);

const ChartWindow = () => (
  <div className="flex min-w-0 flex-1">
    <div className="relative w-[1003px] shrink-0 bg-white">
      <Chart />
      <span className="absolute top-0 left-0 flex h-[18px] w-[17px] items-center justify-center bg-[#c6c6c6] font-['Liberation_Sans',sans-serif] text-[11px] font-bold text-[#222]">1</span>
    </div>
    <div className="w-[57px] shrink-0 bg-[#bcbcbc]" />
    <div className="flex flex-1 bg-[#f0f0f0]">
      <span className="ml-[1px] w-[2px] bg-[#9a9a9a]" />
      <div className="ml-[2px] flex flex-1 flex-col">
        <div className="flex h-[12px] items-center gap-[2px] pt-[2px]">
          <span className="h-[9px] w-[6px] border border-[#aaa] bg-[#e4e4e4]" />
          <span className="flex h-[9px] w-[10px] items-center justify-center border border-[#aaa] bg-[#ddd]"><svg width="8" height="8" viewBox="0 0 8 8" fill="none"><path d="M1 1l6 6M7 1L1 7" stroke="#111" strokeWidth="1.600" /></svg></span>
        </div>
        <div className="mr-[3px] ml-[4px] flex flex-1 flex-col items-center border-x border-[#c8c8c8] pt-[7px] pb-[14px]">
          <svg width="8" height="6" viewBox="0 0 8 6" fill="none" className="block"><path d="M1 5l3-3 3 3" stroke="#666" strokeWidth="1.300" /></svg>
          <span className="mt-auto mb-[6px] h-[14px] w-[12px] bg-[#cdcdcd]" />
          <svg width="8" height="6" viewBox="0 0 8 6" fill="none" className="block"><path d="M1 1l3 3 3-3" stroke="#666" strokeWidth="1.300" /></svg>
        </div>
      </div>
    </div>
  </div>
);

const Main = () => (
  <div className="flex h-[708px] bg-[#f0f0f0]">
    <LeftBar />
    <Panel />
    <div className="flex w-[9px] shrink-0 justify-end bg-[#f0f0f0]"><span className="w-[2px] bg-[#8c8c8c]" /></div>
    <ChartWindow />
  </div>
);

const BottomBar = () => (
  <div className="flex h-[26px] items-center border-b-2 border-[#cfcfcf] bg-[#f0f0f0]">
    <Grip />
    {["plotLine", "plotDots", "plotLS", "plotBar", "plotBox", "plot3d", "plotArea", "plotPolar", "plotStock"].map((n) => (
      <React.Fragment key={n}><Cell n={n} /><DropDark /></React.Fragment>
    ))}
    <Cell n="plotTpl" />
    <span className="ml-[5px] h-[24px] w-px bg-[#b4b4b4]" />
    <span className="w-[300px] shrink-0" />
    <Grip />
    <Cell n="g3d1" />
    <Drop />
    <Sep />
    <Cell n="g3d2" />
    <Drop />
    <Sep />
    <Cell n="g3d3" /><Drop />
    <Cell n="g3d4" /><Drop />
    <Cell n="g3d5" /><Drop />
    <Cell n="g3d6" /><Drop />
    <span className="w-[7px] shrink-0" />
    <Grip />
    <Cells ns={["a1", "a2"]} /><Sep />
    <Cells ns={["a3", "a4"]} /><Sep />
    <Cells ns={["a5", "a6"]} /><Sep />
    <Cells ns={["a7", "a8"]} /><Sep />
    <Cells ns={["o1", "o2"]} /><Sep />
    <Cells ns={["d1", "d1"]} /><Sep />
    <Cells ns={["r1", "r2"]} />
    <span className="ml-[5px] h-[24px] w-px bg-[#b4b4b4]" />
  </div>
);

const Field = ({ t, className }: { t: string; className: string }) => (
  <span className={`flex h-[17px] shrink-0 items-start border-r border-[#c8c8c8] pl-[4px] whitespace-nowrap ${className}`}>{t}</span>
);

const StatusBar = () => (
  <div className="flex h-[17px] bg-[#f0f0f0] pt-[1px] text-[10.5px] leading-[14px] tracking-[-0.3px] text-[#333]">
    <span className="w-[1117px] shrink-0 pl-[2px] whitespace-nowrap">expGraph: Export graph(s) to graphics file(s)</span>
    <Field t="AU : ON" className="w-[48px]" />
    <Field t="Dark Colors & Light Grids" className="w-[145px]" />
    <Field t={'1:[Book2]Sheet1!Col("I1")[1:6]'} className="w-[165px]" />
    <Field t="1:[Graph1]1!1" className="w-[80px]" />
    <span className="pl-[4px]">Radian</span>
  </div>
);

export default function App() {
  return (
    <div className="relative h-[847px] w-[1600px] overflow-hidden bg-[#f0f0f0] font-['Roboto',sans-serif]">
      <MenuBar />
      <Row1 />
      <Row2 />
      <Row3 />
      <div className="h-px bg-[#666]" />
      <Main />
      <BottomBar />
      <StatusBar />
      <FileMenu />
      <SubMenu />
      <Watermark />
    </div>
  );
}
